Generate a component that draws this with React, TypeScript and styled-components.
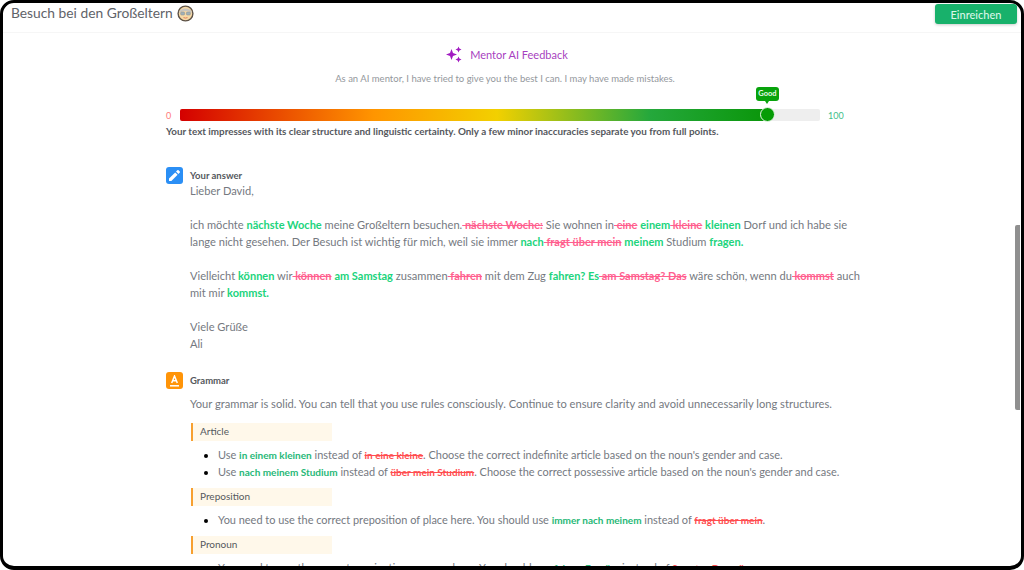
import React from "react";
import styled, { createGlobalStyle } from "styled-components";

const Global = createGlobalStyle`
  html, body { margin: 0; padding: 0; background: #fff; overflow: hidden; }
  body { font-family: "Lato", "Noto Sans", sans-serif; }
`;

const Frame = styled.div`
  position: relative;
  box-sizing: border-box;
  width: 1024px;
  height: 570px;
  border: 3px solid #000;
  border-bottom-width: 4px;
  border-radius: 14px;
  overflow: hidden;
  background: #fff;
  display: flex;
  flex-direction: column;
`;

const Header = styled.header`
  flex: none;
  box-sizing: border-box;
  height: 30px;
  padding: 0 4px 0 8px;
  display: flex;
  align-items: flex-start;
  justify-content: space-between;
  border-bottom: 1px solid #f6f6f6;
`;

const Title = styled.h1`
  margin: 0;
  display: flex;
  align-items: center;
  gap: 4px;
  font-size: 13.8px;
  line-height: 20px;
  font-weight: 400;
  color: #5f6369;
`;

const SubmitButton = styled.button`
  width: 82px;
  height: 20px;
  margin-top: 1px;
  border: 0;
  border-radius: 3px;
  padding: 0;
  background: #18b16b;
  color: #d9f6e7;
  font: 500 11px "Lato", sans-serif;
  box-shadow: 0 1px 3px rgba(0, 0, 0, 0.2);
`;

const Main = styled.main`
  flex: 1;
  min-height: 0;
  overflow: hidden;
  padding: 0 0 0 163px;
`;

const Column = styled.div`
  width: 704px;
`;

const MentorTitle = styled.div`
  display: flex;
  align-items: center;
  justify-content: center;
  gap: 7px;
  height: 20px;
  margin-top: 11px;
  margin-right: 22px;
  font-size: 11px;
  color: #a83fc0;
`;

const Disclaimer = styled.p`
  margin: 8px 26px 0 0;
  text-align: center;
  font-size: 9.5px;
  line-height: 14px;
  color: #94989d;
`;

const ScoreRow = styled.div`
  display: flex;
  align-items: center;
  height: 12px;
  margin-top: 23px;
`;

const ScoreEnd = styled.span<{ $color: string; $width: number }>`
  flex: none;
  width: ${(p) => p.$width}px;
  font-size: 9px;
  color: ${(p) => p.$color};
`;

const Track = styled.div`
  position: relative;
  flex: none;
  width: 640px;
  height: 12px;
  margin-right: 8px;
  border-radius: 2px;
  background: #eeeeee;
`;

const Fill = styled.div`
  height: 100%;
  border-radius: 2px 0 0 2px;
  background: linear-gradient(90deg, #d40000 0%, #ff9500 33%, #f2d000 54%, #25a83c 80%, #0a960a 100%);
`;

const Thumb = styled.div`
  position: absolute;
  top: -2px;
  width: 13px;
  height: 13px;
  margin-left: -7px;
  border: 1px solid #e8f5e8;
  border-radius: 50%;
  background: #069c06;
`;

const Bubble = styled.div`
  position: absolute;
  top: -22px;
  width: 23px;
  height: 14px;
  margin-left: -11px;
  border-radius: 3px;
  background: #08a30c;
  color: #e9fbe9;
  text-align: center;
  font-size: 7.5px;
  font-weight: 700;
  line-height: 13px;
  &::after {
    content: "";
    position: absolute;
    left: 9px;
    bottom: -3px;
    border: 2.5px solid transparent;
    border-bottom: 0;
    border-top: 3px solid #08a30c;
  }
`;

const Verdict = styled.p`
  margin: 3px 0 0;
  font-size: 9.85px;
  line-height: 14px;
  font-weight: 700;
  color: #55585d;
`;

const Section = styled.section<{ $top: number }>`
  display: grid;
  grid-template-columns: 17px 1fr;
  column-gap: 7px;
  margin-top: ${(p) => p.$top}px;
`;

const IconTile = styled.div<{ $color: string }>`
  width: 17px;
  height: 17px;
  border-radius: 3px;
  background: ${(p) => p.$color};
  display: flex;
  align-items: center;
  justify-content: center;
`;

const SectionLabel = styled.div`
  font-size: 9.5px;
  font-weight: 700;
  line-height: 17px;
  color: #55585d;
`;

const Answer = styled.div`
  grid-column: 2;
  margin-top: -2px;
  font-size: 11.1px;
  line-height: 17px;
  color: #75797f;
`;

const Para = styled.p`
  margin: 0 0 17px;
`;

const Added = styled.b`
  font-weight: 700;
  font-size: 11px;
  line-height: 1;
  color: #20d47c;
`;

const Removed = styled.s`
  font-weight: 700;
  font-size: 11px;
  line-height: 1;
  color: #ff5f8f;
`;

const Body = styled.div`
  grid-column: 2;
  font-size: 11.15px;
  line-height: 17px;
  color: #75797f;
`;

const Intro = styled.p`
  margin: 6px 0 11px;
`;

const Tag = styled.div`
  box-sizing: border-box;
  width: 141px;
  height: 18px;
  margin: 0 0 5px 1px;
  padding-left: 7px;
  border-left: 2px solid #f7a030;
  background: #fff8ea;
  font-size: 10px;
  line-height: 17px;
  color: #55585d;
`;

const Items = styled.ul`
  margin: 0 0 8px;
  padding: 0 0 0 28px;
  font-size: 10.95px;
  & li::marker { color: #000; }
`;

const Fix = styled.b`
  font-weight: 700;
  font-size: 10px;
  line-height: 1;
  color: #27b877;
`;

const Wrong = styled.s`
  font-weight: 700;
  font-size: 10px;
  line-height: 1;
  color: #ff4d4f;
`;

const ScrollThumb = styled.div`
  position: absolute;
  top: 222px;
  right: 1px;
  width: 5px;
  height: 185px;
  border-radius: 2px 0 0 2px;
  background: #8f8f8f;
`;

const Grandma = () => (
  <svg width="17" height="17" viewBox="0 0 17 17">
    <circle cx="8.5" cy="8.5" r="7.4" fill="#f6d9a6" stroke="#5d5247" strokeWidth="1.4" />
    <path d="M2 8 C2.5 2 14.5 2 15 8 C13 5.5 4 5.5 2 8Z" fill="#c9c6c0" />
    <rect x="3.6" y="7" width="4" height="3" rx="1" fill="#9fb0b8" stroke="#8a8f92" strokeWidth=".5" />
    <rect x="9.4" y="7" width="4" height="3" rx="1" fill="#9fb0b8" stroke="#8a8f92" strokeWidth=".5" />
    <path d="M6.5 12.6 Q8.5 13.6 10.5 12.6" fill="none" stroke="#e0805f" strokeWidth="1" />
  </svg>
);

const Sparkles = () => (
  <svg width="17" height="17" viewBox="0 0 17 17" fill="#a21cc2">
    <path d="M5.5 3 L7 7 L11 8.5 L7 10 L5.5 14 L4 10 L0 8.5 L4 7 Z" />
    <path d="M12.5 .5 L13.4 2.6 L15.5 3.5 L13.4 4.4 L12.5 6.5 L11.6 4.4 L9.5 3.5 L11.6 2.6 Z" />
    <path d="M12.5 10.5 L13.4 12.6 L15.5 13.5 L13.4 14.4 L12.5 16.5 L11.6 14.4 L9.5 13.5 L11.6 12.6 Z" />
  </svg>
);

const Pencil = () => (
  <svg width="13" height="13" viewBox="0 0 13 13" fill="#fff">
    <path d="M1 9.6 L1 12 L3.4 12 L9.6 5.8 L7.2 3.4 Z" />
    <path d="M8 2.6 L10.4 5 L11.8 3.6 C12.1 3.3 12.1 2.8 11.8 2.5 L10.5 1.2 C10.2 .9 9.7 .9 9.4 1.2 Z" />
  </svg>
);

const LetterMark = () => (
  <svg width="11" height="12" viewBox="0 0 11 12" fill="none" stroke="#fff" strokeWidth="1.5">
    <path d="M2.7 8 L5.5 1 L8.3 8 M3.8 5.8 H7.2" />
    <path d="M1 10.8 H10" />
  </svg>
);

export default function App() {
  return (
    <>
      <Global />
      <Frame>
        <Header>
          <Title>
            Besuch bei den Großeltern <Grandma />
          </Title>
          <SubmitButton>Einreichen</SubmitButton>
        </Header>
        <Main>
          <Column>
            <MentorTitle>
              <Sparkles />
              Mentor AI Feedback
            </MentorTitle>
            <Disclaimer>
              As an AI mentor, I have tried to give you the best I can. I may have made mistakes.
            </Disclaimer>
            <ScoreRow>
              <ScoreEnd $color="#ff7a7a" $width={14}>0</ScoreEnd>
              <Track>
                <Fill style={{ width: "91.7%" }} />
                <Bubble style={{ left: "91.7%" }}>Good</Bubble>
                <Thumb style={{ left: "91.7%" }} />
              </Track>
              <ScoreEnd $color="#3fc08a" $width={30}>100</ScoreEnd>
            </ScoreRow>
            <Verdict>
              Your text impresses with its clear structure and linguistic certainty. Only a few minor inaccuracies separate you from full points.
            </Verdict>
            <Section $top={29}>
              <IconTile $color="#2b8ff5"><Pencil /></IconTile>
              <SectionLabel>Your answer</SectionLabel>
              <Answer>
                <Para>Lieber David,</Para>
                <Para>
                  ich möchte <Added>nächste Woche</Added> meine Großeltern besuchen.<Removed> nächste Woche:</Removed> Sie wohnen in<Removed> eine</Removed> <Added>einem</Added><Removed> kleine</Removed> <Added>kleinen</Added> Dorf und ich habe sie lange nicht gesehen. Der Besuch ist wichtig für mich, weil sie immer <Added>nach</Added><Removed> fragt über mein</Removed> <Added>meinem</Added> Studium <Added>fragen.</Added>
                </Para>
                <Para>
                  Vielleicht <Added>können</Added> wir<Removed> können</Removed> <Added>am Samstag</Added> zusammen<Removed> fahren</Removed> mit dem Zug <Added>fahren? Es</Added><Removed> am Samstag? Das</Removed> wäre schön, wenn du<Removed> kommst</Removed> auch mit mir <Added>kommst.</Added>
                </Para>
                <Para>Viele Grüße<br />Ali</Para>
              </Answer>
            </Section>
            <Section $top={3}>
              <IconTile $color="#ff9408"><LetterMark /></IconTile>
              <SectionLabel>Grammar</SectionLabel>
              <Body>
                <Intro>
                  Your grammar is solid. You can tell that you use rules consciously. Continue to ensure clarity and avoid unnecessarily long structures.
                </Intro>
                <Tag>Article</Tag>
                <Items>
                  <li>Use <Fix>in einem kleinen</Fix> instead of <Wrong>in eine kleine</Wrong>. Choose the correct indefinite article based on the noun's gender and case.</li>
                  <li>Use <Fix>nach meinem Studium</Fix> instead of <Wrong>über mein Studium</Wrong>. Choose the correct possessive article based on the noun's gender and case.</li>
                </Items>
                <Tag>Preposition</Tag>
                <Items>
                  <li>You need to use the correct preposition of place here. You should use <Fix>immer nach meinem</Fix> instead of <Wrong>fragt über mein</Wrong>.</li>
                </Items>
                <Tag>Pronoun</Tag>
                <Items>
                  <li>You need to use the correct nominative pronoun here. You should use <Fix>fahren Es wäre</Fix> instead of <Wrong>Samstag Das wäre</Wrong>.</li>
                </Items>
              </Body>
            </Section>
          </Column>
        </Main>
        <ScrollThumb />
      </Frame>
    </>
  );
}
